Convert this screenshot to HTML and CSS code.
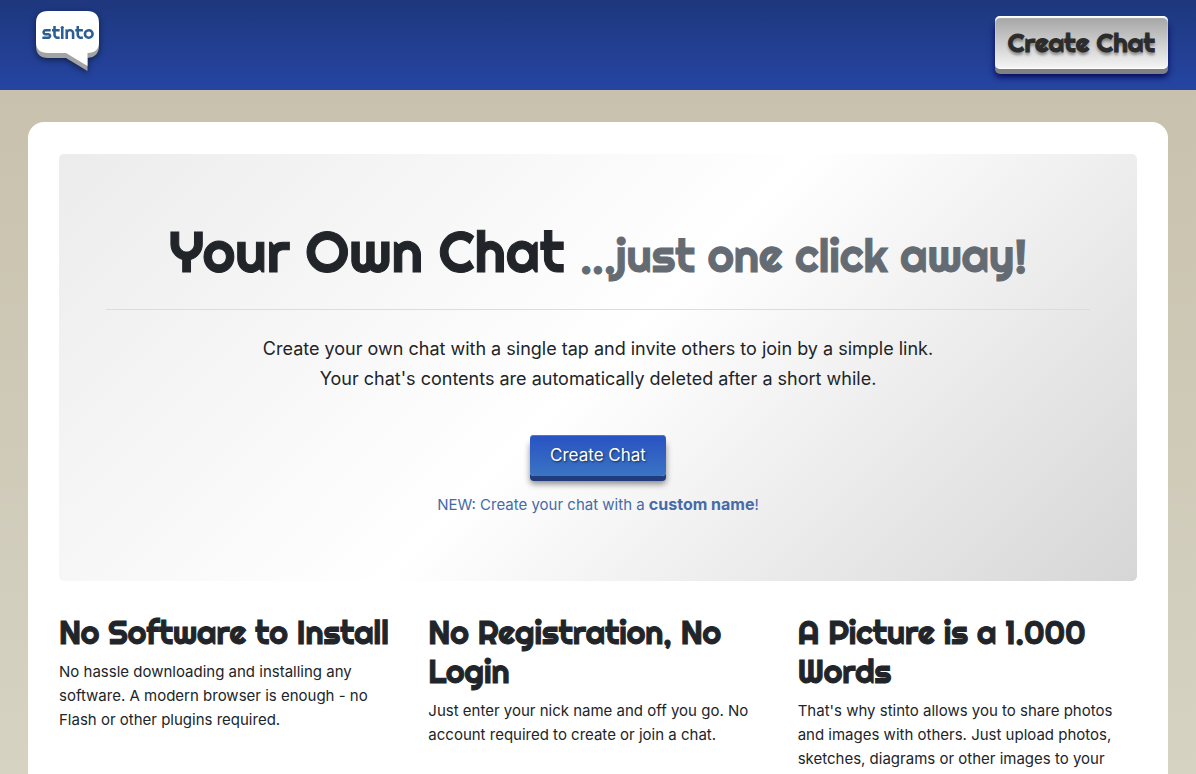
FILE: index.html
```html
<!DOCTYPE html>
<html lang="en">
<head>
  <meta charset="UTF-8">
  <meta name="viewport" content="width=device-width, initial-scale=1">
  <title>stinto</title>
  <link rel="stylesheet" href="styles.css">
</head>
<body>
  <header class="topbar">
    <div class="topbar-inner">
      <a class="logo" href="#" aria-label="stinto">
        <svg width="80" height="76" viewBox="0 0 80 76">
          <path class="logo-edge" d="M8 30H71V46Q71 57 59.500 58V71L38 58H20Q8 58 8 46Z"/>
          <path class="logo-bubble" d="M20 11H59Q71 11 71 23V42Q71 53 59.500 53V66L38 53H20Q8 53 8 42V23Q8 11 20 11Z"/>
          <text class="logo-text" x="40" y="39" text-anchor="middle">stinto</text>
        </svg>
      </a>
      <button class="btn-top" type="button">Create Chat</button>
    </div>
  </header>

  <main class="container">
    <section class="hero">
      <h1>Your Own Chat <small>...just one click away!</small></h1>
      <hr>
      <p class="lead">Create your own chat with a single tap and invite others to join by a simple link.<br>
        Your chat's contents are automatically deleted after a short while.</p>
      <button class="btn-create" type="button">Create Chat</button>
      <p class="custom"><a href="#">NEW: Create your chat with a <b>custom name</b>!</a></p>
    </section>

    <section class="features">
      <div class="feature">
        <h2>No Software to Install</h2>
        <p>No hassle downloading and installing any software. A modern browser is enough - no Flash or other plugins required.</p>
      </div>
      <div class="feature">
        <h2>No Registration, No Login</h2>
        <p>Just enter your nick name and off you go. No account required to create or join a chat.</p>
      </div>
      <div class="feature">
        <h2>A Picture is a 1.000 Words</h2>
        <p>That's why stinto allows you to share photos and images with others. Just upload photos, sketches, diagrams or other images to your</p>
      </div>
    </section>
  </main>
</body>
</html>
```

FILE: styles.css
```css
* {
  box-sizing: border-box;
}
body {
  margin: 0;
  font-family: Inter, "Liberation Sans", sans-serif;
  font-size: 15px;
  line-height: 24px;
  color: #212529;
  background: linear-gradient(#c8c1ad 90px, #d6d3c3 774px);
}
h1, h2, .btn-top {
  font-family: Righteous, Lato, sans-serif;
  font-weight: 500;
  -webkit-text-stroke: 1px currentColor;
}
.topbar {
  height: 90px;
  padding: 0 28px;
  background: linear-gradient(#1e377d, #2545a2);
}
.topbar-inner {
  display: flex;
  justify-content: space-between;
  align-items: flex-start;
  max-width: 1140px;
  margin: 0 auto;
}
.logo svg {
  display: block;
  filter: drop-shadow(0 2px 3px rgba(0,0,0,0.5));
}
.logo-edge {
  fill: #a3a3a3;
}
.logo-bubble {
  fill: #fff;
}
.logo-text {
  fill: #2c5e92;
  font-family: Righteous, Lato, sans-serif;
  font-size: 19px;
}
.btn-top {
  margin-top: 16px;
  padding: 8px 13px;
  border: 0;
  border-radius: 5px;
  font-size: 26px;
  line-height: 37px;
  color: #2c2c2c;
  text-shadow: 0 3px 3px rgba(0,0,0,0.4);
  background: linear-gradient(#a3a3a3, #f6f6f6);
  box-shadow: inset 0 2px 1px #fff, inset 0 -1px 1px #fff, 0 5px 0 #808080, 0 8px 6px #05085e;
  cursor: pointer;
}
.container {
  max-width: 1140px;
  margin: 32px auto 0;
  padding: 32px 31px;
  border-radius: 16px;
  background: #fff;
}
.hero {
  padding: 64px 47px;
  border-radius: 5px;
  text-align: center;
  background: linear-gradient(135deg, #ececec, #fff 50%, #d6d6d6);
}
h1 {
  margin: 0;
  font-size: 56px;
  line-height: 67px;
}
h1 small {
  font-size: 45px;
  line-height: 1;
  color: #646b72;
}
hr {
  margin: 24px 0;
  border: 0;
  border-top: 1px solid #dcdcdc;
}
.lead {
  margin: 0 0 41px;
  font-size: 18px;
  line-height: 30px;
}
.btn-create {
  padding: 8px 20px;
  border: 0;
  border-radius: 4px;
  font-family: inherit;
  font-size: 17px;
  line-height: 25px;
  color: #fff;
  text-shadow: 1px 1px 2px rgba(0,0,0,0.6);
  background: linear-gradient(#2852c2, #3b74c4);
  box-shadow: inset 0 1px 0 #4a7cc4, 0 5px 0 #203c7c, 0 8px 6px rgba(0,0,0,0.45);
  cursor: pointer;
}
.custom {
  margin: 16px 0 0;
}
.custom a {
  color: #456ba8;
  text-decoration: none;
}
.custom b {
  font-size: 16px;
}
.features {
  display: grid;
  grid-template-columns: repeat(3, 1fr);
  gap: 30px;
  margin-top: 32px;
}
h2 {
  margin: 0 0 8px;
  font-size: 32px;
  line-height: 39px;
}
.feature p {
  margin: 0;
}
@media (max-width: 768px) {
  .features {
    grid-template-columns: 1fr;
  }
}
```
